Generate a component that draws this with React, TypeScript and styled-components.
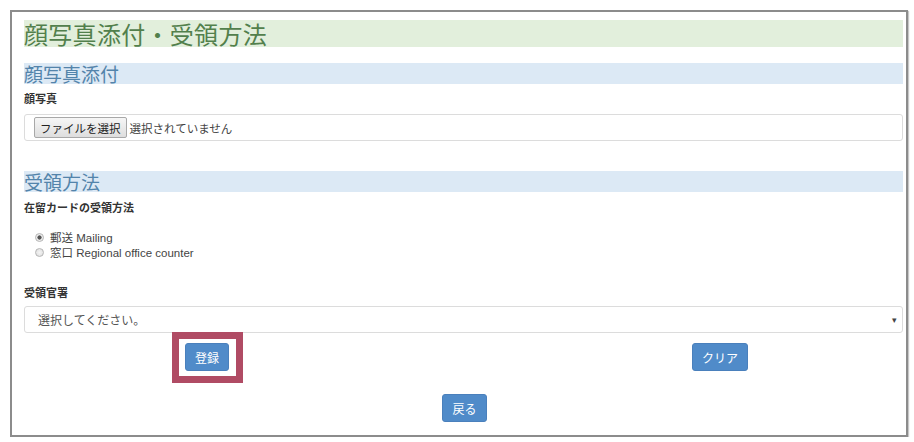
import React, { useState } from 'react';
import styled, { createGlobalStyle } from 'styled-components';

const JP = `"Liberation Sans", "Noto Sans CJK JP", sans-serif`;

const GlobalStyle = createGlobalStyle`
  html, body {
    margin: 0;
    padding: 0;
    background: #ffffff;
  }
  body {
    font-family: ${JP};
    color: #333333;
  }
`;

const App = () => {
  const [method, setMethod] = useState('mail');

  return (
    <>
      <GlobalStyle />
      <Frame>
        <TitleBar>顔写真添付・受領方法</TitleBar>

        <SectionBar>顔写真添付</SectionBar>
        <FieldLabel>顔写真</FieldLabel>
        <FileBox>
          <FileButton type="button">ファイルを選択</FileButton>
          <FileStatus>選択されていません</FileStatus>
        </FileBox>

        <SectionBar $top={30}>受領方法</SectionBar>
        <FieldLabel $top={9}>在留カードの受領方法</FieldLabel>
        <RadioList>
          <RadioRow>
            <Radio
              type="radio"
              name="method"
              checked={method === 'mail'}
              onChange={() => setMethod('mail')}
            />
            郵送 Mailing
          </RadioRow>
          <RadioRow>
            <Radio
              type="radio"
              name="method"
              checked={method === 'office'}
              onChange={() => setMethod('office')}
            />
            窓口 Regional office counter
          </RadioRow>
        </RadioList>

        <FieldLabel $top={27}>受領官署</FieldLabel>
        <SelectBox>
          <span>選択してください。</span>
          <Caret>▾</Caret>
        </SelectBox>

        <ButtonRow>
          <Highlight>
            <BlueButton type="button">登録</BlueButton>
          </Highlight>
          <BlueButton type="button">クリア</BlueButton>
        </ButtonRow>
        <BackRow>
          <BlueButton type="button">戻る</BlueButton>
        </BackRow>
      </Frame>
    </>
  );
};

export default App;

const Frame = styled.div`
  margin: 10px 0 0 10px;
  box-sizing: border-box;
  width: 898px;
  height: 427px;
  border: 2px solid #8c8c8c;
  box-shadow: 1px 1px 1px #c8c8c8;
  padding: 8px 3px 0 12px;
  display: flex;
  flex-direction: column;
`;

const TitleBar = styled.h1`
  margin: 0;
  height: 27px;
  line-height: 27px;
  background: #e2efdc;
  color: #52804c;
  font-family: "Noto Sans CJK JP", sans-serif;
  font-weight: 400;
  font-size: 24px;
  letter-spacing: 0.3px;
`;

const SectionBar = styled.h2<{ $top?: number }>`
  margin: ${(p) => p.$top ?? 16}px 0 0;
  height: 21px;
  line-height: 21px;
  background: #dce9f5;
  color: #5384ab;
  font-family: "Noto Sans CJK JP", sans-serif;
  font-weight: 400;
  font-size: 19px;
`;

const FieldLabel = styled.div<{ $top?: number }>`
  margin-top: ${(p) => p.$top ?? 8}px;
  font-size: 11px;
  line-height: 14px;
  font-weight: 700;
  color: #333333;
`;

const FileBox = styled.div`
  margin-top: 8px;
  height: 27px;
  box-sizing: border-box;
  border: 1px solid #dcdcdc;
  border-radius: 3px;
  display: flex;
  align-items: center;
  padding-left: 9px;
  gap: 3px;
`;

const FileButton = styled.button`
  height: 21px;
  padding: 0 5px;
  font-family: ${JP};
  font-size: 11.5px;
  color: #222222;
  background: linear-gradient(#f6f6f6, #dedede);
  border: 1px solid #a8a8a8;
  border-radius: 2px;
`;

const FileStatus = styled.span`
  font-size: 11.5px;
  color: #444444;
`;

const RadioList = styled.div`
  margin: 15px 0 0 11px;
  display: flex;
  flex-direction: column;
  gap: 1px;
`;

const RadioRow = styled.label`
  display: flex;
  align-items: center;
  gap: 6px;
  height: 14px;
  font-size: 11.5px;
  color: #444444;
`;

const Radio = styled.input`
  appearance: none;
  margin: 0;
  width: 9px;
  height: 9px;
  border-radius: 50%;
  border: 1px solid #b5b5b5;
  background: radial-gradient(circle, #f4f4f4, #dcdcdc);
  box-sizing: border-box;
  &:checked {
    background: radial-gradient(circle, #555555 0 1.8px, #eeeeee 2.4px);
  }
`;

const SelectBox = styled.div`
  margin-top: 6px;
  height: 27px;
  box-sizing: border-box;
  border: 1px solid #dcdcdc;
  border-radius: 3px;
  padding: 0 5px 0 13px;
  display: flex;
  align-items: center;
  justify-content: space-between;
  font-size: 12px;
  color: #555555;
`;

const Caret = styled.span`
  font-size: 9px;
  color: #444444;
`;

const ButtonRow = styled.div`
  margin-top: 10px;
  display: flex;
  justify-content: center;
  align-items: center;
  gap: 463px;
  padding-left: 6px;
`;

const Highlight = styled.div`
  position: relative;
  display: flex;
  &::after {
    content: '';
    position: absolute;
    left: -13px;
    right: -14px;
    top: -11px;
    bottom: -12px;
    border: 7px solid #b04b64;
    pointer-events: none;
  }
`;

const BackRow = styled.div`
  margin-top: 23px;
  display: flex;
  justify-content: center;
  padding-left: 2px;
`;

const BlueButton = styled.button`
  height: 28px;
  padding: 0 9px;
  background: #508bc9;
  border: 1px solid #4a80bc;
  border-radius: 3px;
  color: #ffffff;
  font-family: ${JP};
  font-size: 12px;
`;
